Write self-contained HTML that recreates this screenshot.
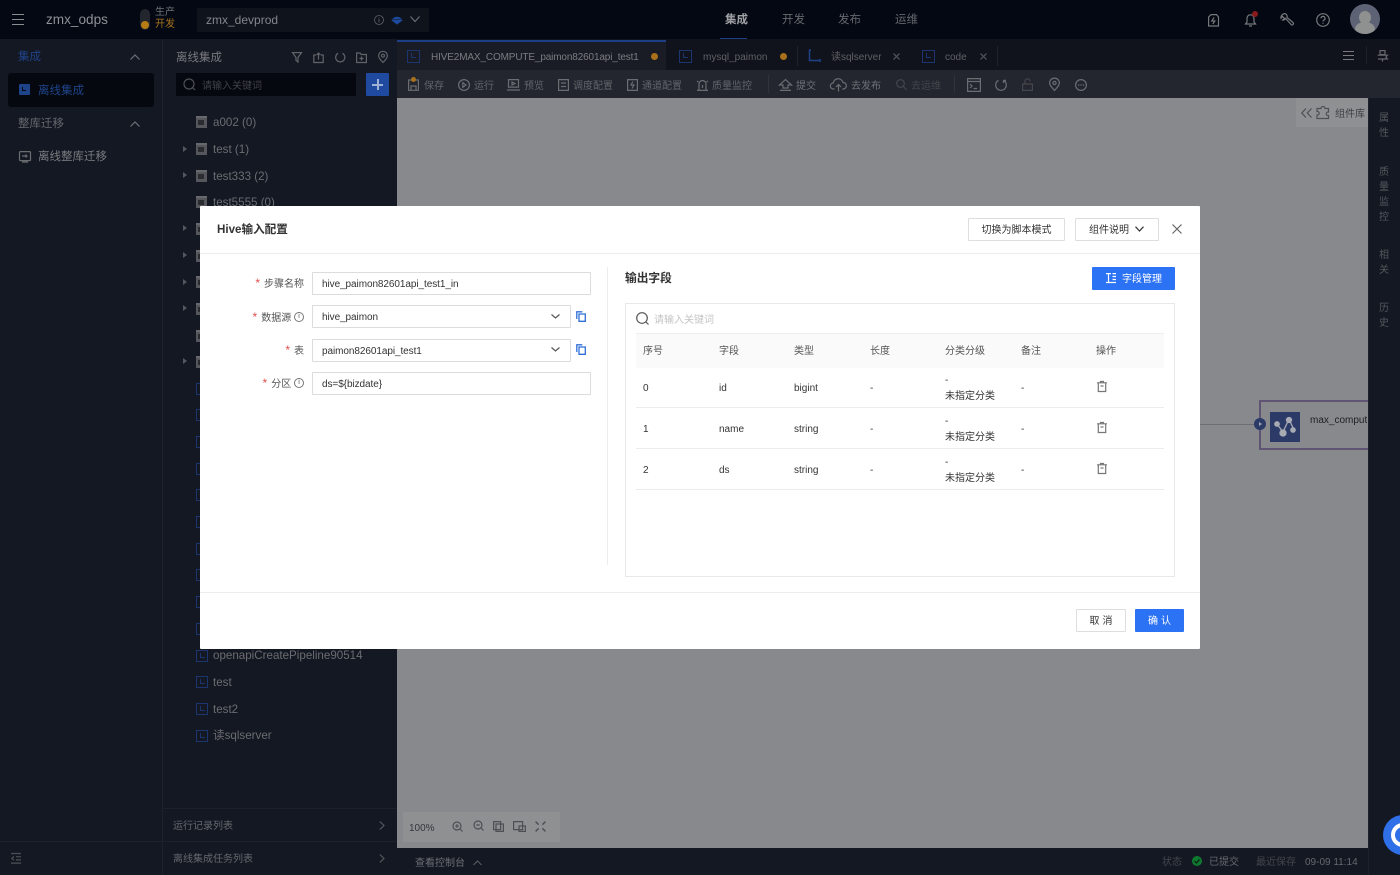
<!DOCTYPE html>
<html lang="zh"><head><meta charset="utf-8"><title>Hive输入配置</title>
<style>
*{box-sizing:border-box}
html,body{margin:0;padding:0}
html{background:#141823}
body{width:1400px;height:875px;overflow:hidden;position:relative;background:#141823;font-family:"Liberation Sans","Noto Sans CJK SC",sans-serif;font-size:11px;color:#77797e;filter:blur(.3px)}
.a{position:absolute}
.t{position:absolute;white-space:nowrap;line-height:16px}
svg{position:absolute;fill:none;stroke:currentColor;stroke-width:1.2;overflow:visible}
.file{position:absolute;left:196px;width:12px;height:12px;border:1.5px solid #1c3570}
.file:after{content:"";position:absolute;left:2.5px;top:2px;width:4px;height:4px;border-left:1.3px solid #1c3570;border-bottom:1.3px solid #1c3570}
.folder{position:absolute;left:196px;width:11px;height:12px;margin-top:-1px;background:#55575c;border-top:2px solid #66686c}
.folder:after{content:"";position:absolute;left:2px;top:2px;width:6px;height:5px;background:#2a2c32}
.tri{position:absolute;left:183px;width:0;height:0;border-left:4px solid #55575c;border-top:3px solid transparent;border-bottom:3px solid transparent}
.tree{font-size:11.6px;color:#6a6c70;left:213px}
.tb{font-size:10px;color:#62656b;top:79px}
.tbi{color:#6a6d72;margin-top:1px}
.input{position:absolute;height:23px;border:1px solid #dcdcdc;background:#fff;color:#333;font-size:10px;line-height:23px;padding-left:9px;border-radius:1px;letter-spacing:-.07px}
.lab{position:absolute;right:1096px;font-size:10px;line-height:16px;color:#555;white-space:nowrap}
.lab b{color:#e34d4d;font-weight:400;margin-right:4px;font-size:12px}
.lab span{display:inline-block;width:10px;height:10px;border:1px solid #777;border-radius:50%;font-size:7px;line-height:8px;text-align:center;vertical-align:middle;position:relative;top:-1px}
.th{position:absolute;top:344px;font-size:10px;line-height:16px;color:#555;white-space:nowrap}
.td{position:absolute;margin-top:1px;font-size:10px;line-height:16px;color:#333;white-space:nowrap}
.btn{position:absolute;height:23px;border:1px solid #dedede;background:#fff;font-size:10px;line-height:23px;color:#333;text-align:center;border-radius:1px}
.line{position:absolute;height:1px;background:#ececec}
</style></head><body>

<!-- top bar -->
<div class="a" style="left:0;top:0;width:1400px;height:39px;background:#030813"></div>
<div class="a" style="left:12px;top:14px;width:12px;height:11px;border-top:1px solid #8a8c90;border-bottom:1px solid #8a8c90"></div>
<div class="a" style="left:12px;top:19px;width:12px;height:1px;background:#8a8c90"></div>
<div class="t" style="left:46px;top:12px;font-size:13.6px;color:#8e9094">zmx_odps</div>
<div class="a" style="left:140px;top:9px;width:10px;height:21px;border-radius:5px;background:#23262d"></div>
<div class="a" style="left:141px;top:21px;width:8px;height:8px;border-radius:50%;background:#b87c14"></div>
<div class="t" style="left:155px;top:7px;font-size:10px;line-height:12px;color:#6e7074">生产</div>
<div class="t" style="left:155px;top:19px;font-size:10px;line-height:12px;color:#a8741c">开发</div>
<div class="a" style="left:197px;top:8px;width:232px;height:24px;background:#0f131c"></div>
<div class="t" style="left:206px;top:12px;font-size:12px;color:#84868a">zmx_devprod</div>
<svg style="left:374px;top:15px;color:#5f6166;stroke-width:.8" width="10" height="10"><circle cx="5" cy="5" r="4.500"/><path d="M5 4v3.500M5 2.400v1"/></svg>
<svg style="left:392px;top:16px;color:#1e4a9e;stroke-width:1" width="10" height="9"><path d="M.5 3.500C3 .5 7 .5 9.500 3.500M.5 4.500h9L5 8z" fill="#1e4a9e"/></svg>
<svg style="left:410px;top:16px;color:#6a6c70" width="10" height="7"><path d="M.5 .5L5 5.500 9.500 .5"/></svg>

<div class="t" style="left:725px;top:12px;font-size:11.5px;font-weight:700;color:#a0a2a6">集成</div>
<div class="a" style="left:720px;top:38px;width:27px;height:2px;background:#1c3f86"></div>
<div class="t" style="left:782px;top:12px;font-size:11.5px;color:#66686d">开发</div>
<div class="t" style="left:838px;top:12px;font-size:11.5px;color:#66686d">发布</div>
<div class="t" style="left:895px;top:12px;font-size:11.5px;color:#66686d">运维</div>

<svg style="left:1208px;top:14px;color:#75777b" width="11" height="13"><path d="M3 .6h5.500L10.500 3v9H.6V3zM6 3.500L3.800 7h3L4.800 10"/></svg>
<svg style="left:1245px;top:14px;color:#75777b" width="11" height="13"><path d="M.5 10h10L9 8V5C9 1.500 7 .8 5.500 .8S2 1.500 2 5v3zM4 12h3"/></svg>
<div class="a" style="left:1252px;top:11px;width:6px;height:6px;border-radius:50%;background:#8a1a1a"></div>
<svg style="left:1280px;top:13px;color:#75777b" width="14" height="14"><path d="M5.500 .7a4 4 0 0 0-4.500 4.500L2.500 3.500 4.500 5.500 2.700 7a3 3 0 0 0 3-1.500L11 11.500a1.200 1.200 0 0 0 2-2L7 4.500A3.500 3.500 0 0 0 5.500 .7z"/></svg>
<svg style="left:1316px;top:13px;color:#75777b" width="14" height="14"><circle cx="7" cy="7" r="6.300"/><path d="M5 5.300a2 2 0 1 1 2.800 1.900c-.6.300-.8.700-.8 1.300M7 9.800v1"/></svg>
<div class="a" style="left:1350px;top:4px;width:30px;height:30px;border-radius:50%;background:#5e6275;overflow:hidden">
  <div class="a" style="left:9px;top:7px;width:12px;height:13px;border-radius:50%;background:#8f9190"></div>
  <div class="a" style="left:5px;top:18px;width:20px;height:14px;border-radius:50%;background:#8f9190"></div>
</div>

<!-- sidebar 1 -->
<div class="a" style="left:0;top:39px;width:163px;height:836px;background:#141823;border-right:1px solid #1d212b"></div>
<div class="t" style="left:18px;top:49px;font-size:11.5px;line-height:17px;color:#1f4389">集成</div>
<svg style="left:130px;top:54px;color:#6e7074" width="10" height="6"><path d="M.5 5.500L5 1l4.500 4.500"/></svg>
<div class="a" style="left:8px;top:73px;width:146px;height:34px;background:#05090f;border-radius:3px"></div>
<div class="a" style="left:19px;top:84px;width:11px;height:11px;background:#1f4389;border-radius:1px"></div>
<div class="a" style="left:22px;top:87px;width:4px;height:4px;border-left:1px solid #05090f;border-bottom:1px solid #05090f"></div>
<div class="t" style="left:38px;top:83px;font-size:11.5px;color:#1f4389">离线集成</div>
<div class="t" style="left:18px;top:116px;font-size:11.5px;color:#66686d">整库迁移</div>
<svg style="left:130px;top:121px;color:#6e7074" width="10" height="6"><path d="M.5 5.500L5 1l4.500 4.500"/></svg>
<svg style="left:19px;top:151px;color:#6a6c70" width="12" height="12"><path d="M1.500 .6h9q1 0 1 1v7q0 1-1 1h-9q-1 0-1-1v-7q0-1 1-1zM3 11h6M3 5h5M6.500 3.500L8 5 6.500 6.500"/></svg>
<div class="t" style="left:38px;top:149px;font-size:11.5px;color:#7a7c80">离线整库迁移</div>
<div class="a" style="left:0;top:841px;width:162px;height:1px;background:#1d212b"></div>
<svg style="left:11px;top:853px;color:#4c4f55" width="10" height="11"><path d="M0 .5h10M5 3.700h5M5 6.900h5M0 10.100h10M3 3.500L.8 5.300 3 7.100"/></svg>

<!-- sidebar 2 -->
<div class="a" style="left:163px;top:39px;width:234px;height:836px;background:#141823"></div>
<div class="t" style="left:176px;top:50px;font-size:11.5px;color:#77797e">离线集成</div>
<svg style="left:292px;top:52px;color:#616368" width="10" height="11"><path d="M.5 .6h9L6 5.500V10L4 8.500V5.500z"/></svg>
<svg style="left:313px;top:52px;color:#616368" width="11" height="11"><path d="M3 3H.8v7.500h9.400V3H8M5.500 7.500V1M3.500 3l2-2 2 2"/></svg>
<svg style="left:335px;top:52px;color:#616368" width="11" height="11"><path d="M7.500 1.300A4.600 4.600 0 1 1 3 1.300"/></svg>
<svg style="left:356px;top:52px;color:#616368" width="11" height="11"><path d="M.6 1h3.500l1 1.500h5.300v8H.6zM5.500 4.500v4M3.500 6.500h4"/></svg>
<svg style="left:378px;top:51px;color:#616368" width="10" height="12"><path d="M5 11.500C2 8.500.6 6.500.6 4.700a4.400 4.400 0 0 1 8.800 0C9.400 6.500 8 8.500 5 11.500z"/><circle cx="5" cy="4.700" r="1.500"/></svg>

<div class="a" style="left:176px;top:73px;width:180px;height:23px;background:#05090f"></div>
<svg style="left:183px;top:78px;color:#4d4f54" width="13" height="13"><circle cx="6" cy="6" r="5"/><path d="M9.500 9.500l2.500 2.500"/></svg>
<div class="t" style="left:202px;top:78px;font-size:10px;line-height:17px;color:#3f4146">请输入关键词</div>
<div class="a" style="left:366px;top:73px;width:23px;height:23px;background:#1f4aa0;border-radius:1px"></div>
<div class="a" style="left:372px;top:84px;width:11px;height:1.500px;background:#9fb2d6"></div>
<div class="a" style="left:377px;top:79px;width:1.500px;height:11px;background:#9fb2d6"></div>

<div class="folder" style="top:117px"></div><div class="t tree" style="top:115px">a002 (0)</div>
<div class="tri" style="top:146px"></div><div class="folder" style="top:144px"></div><div class="t tree" style="top:142px">test (1)</div>
<div class="tri" style="top:172px"></div><div class="folder" style="top:171px"></div><div class="t tree" style="top:169px">test333 (2)</div>
<div class="folder" style="top:197px"></div><div class="t tree" style="top:195px">test5555 (0)</div>
<div class="tri" style="top:225px"></div><div class="folder" style="top:224px"></div>
<div class="tri" style="top:252px"></div><div class="folder" style="top:251px"></div>
<div class="tri" style="top:279px"></div><div class="folder" style="top:277px"></div>
<div class="tri" style="top:305px"></div><div class="folder" style="top:304px"></div>
<div class="folder" style="top:331px"></div>
<div class="tri" style="top:358px"></div><div class="folder" style="top:357px"></div>
<div class="file" style="top:383px"></div><div class="file" style="top:409px"></div><div class="file" style="top:436px"></div>
<div class="file" style="top:463px"></div><div class="file" style="top:489px"></div><div class="file" style="top:516px"></div>
<div class="file" style="top:543px"></div><div class="file" style="top:569px"></div><div class="file" style="top:596px"></div>
<div class="file" style="top:623px"></div>
<div class="file" style="top:650px"></div><div class="t tree" style="top:648px">openapiCreatePipeline90514</div>
<div class="file" style="top:676px"></div><div class="t tree" style="top:675px">test</div>
<div class="file" style="top:703px"></div><div class="t tree" style="top:702px">test2</div>
<div class="file" style="top:730px"></div><div class="t tree" style="top:728px">读sqlserver</div>

<div class="a" style="left:163px;top:808px;width:234px;height:1px;background:#1d212b"></div>
<div class="a" style="left:163px;top:841px;width:234px;height:1px;background:#1d212b"></div>
<div class="t" style="left:173px;top:819px;font-size:10px;color:#66686d">运行记录列表</div>
<svg style="left:379px;top:821px;color:#55575c" width="6" height="9"><path d="M.8 .5L5 4.500.8 8.500"/></svg>
<div class="t" style="left:173px;top:852px;font-size:10px;color:#66686d">离线集成任务列表</div>
<svg style="left:379px;top:854px;color:#55575c" width="6" height="9"><path d="M.8 .5L5 4.500.8 8.500"/></svg>

<!-- tabs -->
<div class="a" style="left:397px;top:39px;width:1003px;height:31px;background:#10131b"></div>
<div class="a" style="left:397px;top:40px;width:269px;height:30px;background:#191c25;border-top:2px solid #1c3f86"></div>
<div class="file" style="left:407px;top:50px;width:13px;height:13px"></div>
<div class="t" style="left:431px;top:50px;font-size:10px;letter-spacing:-.14px;color:#7a7c80">HIVE2MAX_COMPUTE_paimon82601api_test1</div>
<div class="a" style="left:651px;top:53px;width:7px;height:7px;border-radius:50%;background:#a8701a"></div>
<div class="file" style="left:679px;top:50px;width:13px;height:13px"></div>
<div class="t" style="left:703px;top:50px;font-size:10px;color:#5f6166">mysql_paimon</div>
<div class="a" style="left:780px;top:53px;width:7px;height:7px;border-radius:50%;background:#a8701a"></div>
<div class="a" style="left:797px;top:46px;width:1px;height:20px;background:#1d212b"></div>
<svg style="left:808px;top:49px;color:#1f4389;stroke-width:1.500" width="15" height="14"><path d="M1.500 1v10.500h10M1 1h2M12 10v3"/></svg>
<div class="t" style="left:831px;top:50px;font-size:10px;color:#5f6166">读sqlserver</div>
<svg style="left:893px;top:53px;color:#55575c" width="7" height="7"><path d="M.5 .5l6 6M6.500 .5l-6 6"/></svg>
<div class="file" style="left:922px;top:50px;width:13px;height:13px"></div>
<div class="t" style="left:945px;top:50px;font-size:10px;color:#5f6166">code</div>
<svg style="left:980px;top:53px;color:#55575c" width="7" height="7"><path d="M.5 .5l6 6M6.500 .5l-6 6"/></svg>
<div class="a" style="left:997px;top:46px;width:1px;height:20px;background:#1d212b"></div>
<div class="a" style="left:1343px;top:51px;width:11px;height:9px;border-top:1.300px solid #77797d;border-bottom:1.300px solid #77797d"></div>
<div class="a" style="left:1343px;top:55px;width:11px;height:1.300px;background:#77797d"></div>
<div class="a" style="left:1366px;top:46px;width:1px;height:18px;background:#1d212b"></div>
<svg style="left:1377px;top:50px;color:#66686d" width="11" height="12"><path d="M3 .6h5v4H3zM.6 5.200h9.800l-1.500 2 1.500 1.800H1M5.500 9v2.500"/></svg>

<!-- toolbar -->
<div class="a" style="left:397px;top:70px;width:1003px;height:28px;background:#23262e"></div>
<svg class="tbi" style="left:408px;top:78px" width="11" height="12"><path d="M.6 1h9.800v10.300H.6zM3 11V7h5v4"/></svg>
<div class="a" style="left:411px;top:77px;width:5px;height:5px;border-radius:50%;background:#a8701a"></div>
<div class="t tb" style="left:424px">保存</div>
<svg class="tbi" style="left:458px;top:78px" width="12" height="12"><circle cx="6" cy="6" r="5.400"/><path d="M4.800 3.700L8 6 4.800 8.300z"/></svg>
<div class="t tb" style="left:474px">运行</div>
<svg class="tbi" style="left:507px;top:78px" width="13" height="12"><path d="M1.500 .6h10v7.500h-10zM0 11h13M5 3l3 1.500L5 6z"/></svg>
<div class="t tb" style="left:524px">预览</div>
<svg class="tbi" style="left:558px;top:78px" width="11" height="12"><path d="M.6 .6h9.800v10.800H.6zM3 4h5M3 7.500h5"/></svg>
<div class="t tb" style="left:573px">调度配置</div>
<svg class="tbi" style="left:627px;top:78px" width="11" height="12"><path d="M.6 .6h9.800v10.800H.6zM6 2.500L4 6h3L5 9.500"/></svg>
<div class="t tb" style="left:642px">通道配置</div>
<svg class="tbi" style="left:697px;top:78px" width="11" height="12"><path d="M2 11.400V5a3.500 3.500 0 0 1 7 0v6.400M0 11.400h11M5.500 6v3M0 2l1.500 1M11 2L9.500 3"/></svg>
<div class="t tb" style="left:712px">质量监控</div>
<div class="a" style="left:768px;top:75px;width:1px;height:18px;background:#30333b"></div>
<svg class="tbi" style="left:779px;top:78px" width="13" height="12"><path d="M6.500 .6L12.500 6H9v3H4V6H.5zM1 11.400h11"/></svg>
<div class="t tb" style="left:796px;color:#6f7176">提交</div>
<svg class="tbi" style="left:830px;top:77px" width="17" height="14"><path d="M4.500 11H3.500a3 3 0 0 1-.3-6A5 5 0 0 1 13 4.500a3.200 3.200 0 0 1 .3 6.500h-1M8.500 13.500V6.500M6 9l2.500-2.500L11 9"/></svg>
<div class="t tb" style="left:851px;color:#6f7176">去发布</div>
<svg style="left:896px;top:79px;color:#44464c" width="11" height="12"><circle cx="4.500" cy="4.500" r="3.800"/><path d="M7.500 7.500l3 3.500"/></svg>
<div class="t tb" style="left:911px;color:#44464c">去运维</div>
<div class="a" style="left:954px;top:75px;width:1px;height:18px;background:#30333b"></div>
<svg class="tbi" style="left:967px;top:78px;margin-top:0" width="14" height="14"><path d="M.6 .6h12.800v12.800H.6zM.6 3.500h12.800M3 6l2 2-2 2M6.500 10.500h3.500"/></svg>
<svg class="tbi" style="left:995px;top:79px;margin-top:0" width="12" height="12"><path d="M8.500 1.300A5.300 5.300 0 1 1 3.500 1.300M8.500 1.300V4M8.500 1.300h2.500"/></svg>
<svg style="left:1022px;top:78px;color:#44464c" width="11" height="13"><path d="M.6 6h9.800v6.400H.6zM3 6V3.300a2.500 2.500 0 0 1 5 0"/></svg>
<svg class="tbi" style="left:1049px;top:78px;margin-top:0" width="11" height="13"><path d="M5.500 12.500C2.300 9 .6 7 .6 5a4.900 4.900 0 0 1 9.800 0c0 2-1.700 4-4.900 7.500z"/><circle cx="5.500" cy="5" r="1.600"/></svg>
<svg class="tbi" style="left:1075px;top:79px;margin-top:0" width="12" height="12"><circle cx="6" cy="6" r="5.400"/><path d="M3 6h1.300M5.400 6h1.300M7.800 6h1.300"/></svg>

<!-- canvas -->
<div class="a" style="left:397px;top:98px;width:971px;height:750px;background:#87898c"></div>
<div class="a" style="left:1296px;top:98px;width:72px;height:29px;background:#8e9092"></div>
<svg style="left:1301px;top:108px;color:#4d4f54" width="11" height="10"><path d="M5 .5L.8 5 5 9.500M10.500 .5L6.300 5l4.200 4.500"/></svg>
<svg style="left:1316px;top:105px;color:#4d4f54" width="14" height="14"><path d="M5 3.500a2 2 0 1 1 4 0h3.500V7a1.800 1.800 0 1 0 0 3.500v3H1V10a1.800 1.800 0 1 0 0-3.500V3.500z"/></svg>
<div class="t" style="left:1335px;top:107px;font-size:10px;color:#3c3e43">组件库</div>
<div class="a" style="left:1200px;top:424px;width:55px;height:1px;background:#6c6e73"></div>
<div class="a" style="left:1259px;top:400px;width:112px;height:50px;border:2px solid #5f5472"></div>
<div class="a" style="left:1254px;top:418px;width:12px;height:12px;border-radius:50%;background:#2c3a68"></div>
<div class="a" style="left:1259px;top:422px;width:0;height:0;border-left:3px solid #a0a4b0;border-top:2px solid transparent;border-bottom:2px solid transparent"></div>
<div class="a" style="left:1270px;top:412px;width:30px;height:30px;background:#2c3a68"></div>
<svg style="left:1270px;top:412px;color:#a8abb3;stroke-width:1.300" width="30" height="30"><path d="M7 12l6 8 6-13 5 11"/><circle cx="7" cy="12" r="2.200" fill="#a8abb3"/><circle cx="13" cy="21" r="3" fill="#a8abb3"/><circle cx="19" cy="8" r="2.500" fill="#a8abb3"/><circle cx="23" cy="18" r="2.200" fill="#a8abb3"/></svg>
<div class="t" style="left:1310px;top:413px;font-size:10px;color:#202125;width:57px;overflow:hidden">max_compute</div>
<div class="a" style="left:403px;top:812px;width:157px;height:30px;background:#8e9092"></div>
<div class="t" style="left:409px;top:820px;font-size:10px;line-height:17px;color:#35373b">100%</div>
<svg style="left:452px;top:821px;color:#4d4f54" width="11" height="11"><circle cx="5" cy="5" r="4"/><path d="M8 8l2.500 2.500M3.300 5h3.400M5 3.300v3.400"/></svg>
<svg style="left:473px;top:820px;color:#4d4f54" width="11" height="11"><circle cx="5" cy="5" r="4"/><path d="M8 8l2.500 2.500M3.300 5h3.400"/></svg>
<svg style="left:493px;top:821px;color:#4d4f54" width="11" height="11"><path d="M.6 .6h7v8h-7zM3 3h7.400v7.400H3z"/></svg>
<svg style="left:513px;top:821px;color:#4d4f54" width="13" height="11"><path d="M.6 .6h9v8h-9zM6 5h6.400v5.400H6z"/></svg>
<svg style="left:535px;top:821px;color:#4d4f54;stroke-width:1.500" width="11" height="11"><path d="M.6 .6l3 3M10.400 .6l-3 3M.6 10.400l3-3M10.400 10.400l-3-3"/></svg>

<!-- right strip -->
<div class="a" style="left:1368px;top:98px;width:32px;height:777px;background:#141823;border-left:1px solid #1d212b"></div>
<div class="t" style="left:1379px;top:111px;width:11px;font-size:10px;line-height:15px;color:#55575c;white-space:normal">属性</div>
<div class="t" style="left:1379px;top:165px;width:11px;font-size:10px;line-height:15px;color:#55575c;white-space:normal">质量监控</div>
<div class="t" style="left:1379px;top:248px;width:11px;font-size:10px;line-height:15px;color:#55575c;white-space:normal">相关</div>
<div class="t" style="left:1379px;top:301px;width:11px;font-size:10px;line-height:15px;color:#55575c;white-space:normal">历史</div>

<!-- bottom bar -->
<div class="a" style="left:397px;top:848px;width:971px;height:27px;background:#141823"></div>
<div class="t" style="left:415px;top:856px;font-size:10px;color:#6e7074">查看控制台</div>
<svg style="left:473px;top:860px;color:#55575c" width="9" height="6"><path d="M.5 5L4.500 1l4 4"/></svg>
<div class="t" style="left:1162px;top:855px;font-size:10px;color:#44464c">状态</div>
<div class="a" style="left:1192px;top:856px;width:10px;height:10px;border-radius:50%;background:#0e7a30"></div>
<svg style="left:1192px;top:856px;color:#0b1a12" width="10" height="10"><path d="M2.500 5l2 2 3-3.500"/></svg>
<div class="t" style="left:1209px;top:855px;font-size:10px;color:#66686d">已提交</div>
<div class="t" style="left:1256px;top:855px;font-size:10px;color:#44464c">最近保存</div>
<div class="t" style="left:1305px;top:855px;font-size:10px;color:#66686d">09-09 11:14</div>
<div class="a" style="left:1383px;top:815px;width:40px;height:40px;border-radius:50%;background:#2f6fe8"></div>
<div class="a" style="left:1391px;top:823px;width:24px;height:24px;border-radius:50%;border:4px solid #fff"></div>

<!-- modal -->
<div class="a" style="left:200px;top:206px;width:1000px;height:443px;background:#fff;border-radius:1px"></div>
<div class="t" style="left:217px;top:222px;font-size:11.6px;font-weight:700;color:#333">Hive输入配置</div>
<div class="btn" style="left:968px;top:218px;width:97px">切换为脚本模式</div>
<div class="btn" style="left:1075px;top:218px;width:84px;text-align:left;padding-left:13px">组件说明</div>
<svg style="left:1135px;top:226px;color:#333" width="9" height="6"><path d="M.5 .7l4 4.300 4-4.300"/></svg>
<svg style="left:1172px;top:224px;color:#666" width="10" height="10"><path d="M.5 .5l9 9M9.500 .5l-9 9"/></svg>
<div class="line" style="left:200px;top:253px;width:1000px"></div>

<div class="lab" style="top:275px"><b>*</b>步骤名称</div>
<div class="input" style="left:312px;top:272px;width:279px">hive_paimon82601api_test1_in</div>
<div class="lab" style="top:309px"><b>*</b>数据源 <span>i</span></div>
<div class="input" style="left:312px;top:305px;width:259px">hive_paimon</div>
<svg style="left:551px;top:314px;color:#555" width="9" height="5"><path d="M.5 .5l4 3.500 4-3.500"/></svg>
<svg style="left:576px;top:311px;color:#2f6fd8;stroke-width:1.300" width="10" height="11"><path d="M3 3h6.300v7.300H3zM.8 8V.8h5.500"/></svg>
<div class="lab" style="top:342px"><b>*</b>表</div>
<div class="input" style="left:312px;top:339px;width:259px">paimon82601api_test1</div>
<svg style="left:551px;top:347px;color:#555" width="9" height="5"><path d="M.5 .5l4 3.500 4-3.500"/></svg>
<svg style="left:576px;top:344px;color:#2f6fd8;stroke-width:1.300" width="10" height="11"><path d="M3 3h6.300v7.300H3zM.8 8V.8h5.500"/></svg>
<div class="lab" style="top:375px"><b>*</b>分区 <span>i</span></div>
<div class="input" style="left:312px;top:372px;width:279px">ds=${bizdate}</div>

<div class="a" style="left:607px;top:267px;width:1px;height:298px;background:#ececec"></div>
<div class="t" style="left:625px;top:271px;font-size:11.7px;font-weight:700;color:#333">输出字段</div>
<div class="a" style="left:1092px;top:267px;width:83px;height:23px;background:#2b72f5;border-radius:1px"></div>
<svg style="left:1106px;top:273px;color:#fff" width="11" height="10"><path d="M0 .6h5M2.500 .6V9.500M0 9.500h10M6.500 3.500h3.500M6.500 6.500h3.500M6.500 .6h3.500"/></svg>
<div class="t" style="left:1122px;top:271px;font-size:10px;line-height:17px;color:#fff">字段管理</div>

<div class="a" style="left:625px;top:303px;width:550px;height:274px;border:1px solid #e8e8e8"></div>
<svg style="left:636px;top:312px;color:#555" width="13" height="13"><circle cx="6" cy="6" r="5.300"/><path d="M10 10l2.500 2.500"/></svg>
<div class="t" style="left:654px;top:312px;font-size:10px;line-height:17px;color:#c4c4c4">请输入关键词</div>
<div class="a" style="left:636px;top:333px;width:528px;height:35px;background:#fafafa;border-top:1px solid #eee"></div>
<div class="th" style="left:643px">序号</div><div class="th" style="left:719px">字段</div><div class="th" style="left:794px">类型</div><div class="th" style="left:870px">长度</div><div class="th" style="left:945px">分类分级</div><div class="th" style="left:1021px">备注</div><div class="th" style="left:1096px">操作</div>

<div class="td" style="left:643px;top:380px">0</div><div class="td" style="left:719px;top:380px">id</div><div class="td" style="left:794px;top:380px">bigint</div><div class="td" style="left:870px;top:380px">-</div>
<div class="td" style="left:945px;top:372px">-</div><div class="td" style="left:945px;top:388px">未指定分类</div><div class="td" style="left:1021px;top:380px">-</div>
<div class="line" style="left:636px;top:407px;width:528px"></div>
<div class="td" style="left:643px;top:421px">1</div><div class="td" style="left:719px;top:421px">name</div><div class="td" style="left:794px;top:421px">string</div><div class="td" style="left:870px;top:421px">-</div>
<div class="td" style="left:945px;top:413px">-</div><div class="td" style="left:945px;top:429px">未指定分类</div><div class="td" style="left:1021px;top:421px">-</div>
<div class="line" style="left:636px;top:448px;width:528px"></div>
<div class="td" style="left:643px;top:462px">2</div><div class="td" style="left:719px;top:462px">ds</div><div class="td" style="left:794px;top:462px">string</div><div class="td" style="left:870px;top:462px">-</div>
<div class="td" style="left:945px;top:454px">-</div><div class="td" style="left:945px;top:470px">未指定分类</div><div class="td" style="left:1021px;top:462px">-</div>
<div class="line" style="left:636px;top:489px;width:528px"></div>
<svg style="left:1097px;top:381px;color:#777" width="10" height="11"><path d="M0 1.800h10M3.500 1.800V.5h3v1.300M1.300 1.800h7.400v8.700H1.300zM3.500 5h3"/></svg>
<svg style="left:1097px;top:422px;color:#777" width="10" height="11"><path d="M0 1.800h10M3.500 1.800V.5h3v1.300M1.300 1.800h7.400v8.700H1.300zM3.500 5h3"/></svg>
<svg style="left:1097px;top:463px;color:#777" width="10" height="11"><path d="M0 1.800h10M3.500 1.800V.5h3v1.300M1.300 1.800h7.400v8.700H1.300zM3.500 5h3"/></svg>

<div class="line" style="left:200px;top:592px;width:1000px"></div>
<div class="btn" style="left:1076px;top:609px;width:50px;letter-spacing:3px;padding-left:3px">取消</div>
<div class="a" style="left:1135px;top:609px;width:49px;height:23px;background:#2b72f5;color:#fff;font-size:10px;line-height:25px;padding-left:3px;text-align:center;letter-spacing:3px;border-radius:1px">确认</div>
</body></html>
